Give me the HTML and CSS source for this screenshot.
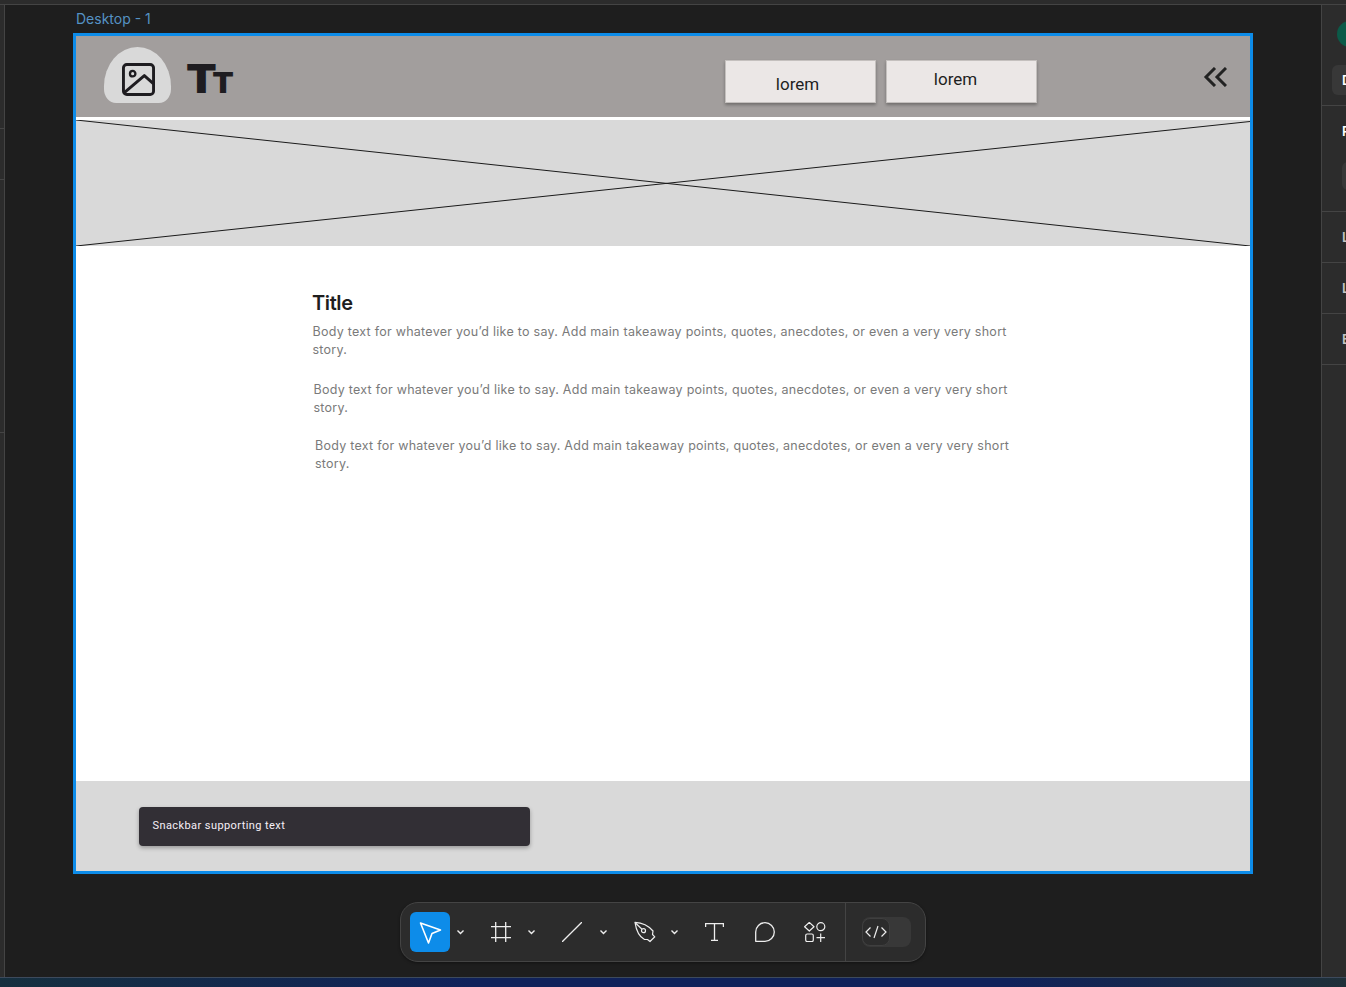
FILE: index.html
```html
<!DOCTYPE html>
<html lang="en">
<head>
    <meta charset="UTF-8">
    <title>Desktop - 1</title>
    <link rel="stylesheet" href="styles.css">
</head>
<body>
    <div class="top-strip"></div>

    <div class="workspace">
        <aside class="left-rail">
            <i class="tick tick-a"></i>
            <i class="tick tick-b"></i>
            <i class="tick tick-c"></i>
        </aside>

        <main class="canvas">
            <div class="frame-label">Desktop - 1</div>

            <div class="frame">
                <header class="site-header">
                    <div class="logo-blob">
                        <svg width="33" height="33" viewBox="0 0 34 34" fill="none" stroke="#1e1c20" stroke-width="3" stroke-linecap="round" stroke-linejoin="round">
                            <rect x="1.5" y="1.5" width="31" height="31" rx="3.5"/>
                            <circle cx="11" cy="11" r="2.8" stroke-width="2.4"/>
                            <path d="M3 30 L23 13 L32 21"/>
                        </svg>
                    </div>
                    <div class="logo-type"><span class="big-t">T</span><span class="small-t">T</span></div>
                    <button class="nav-btn nav-btn-low">lorem</button>
                    <button class="nav-btn nav-btn-high">lorem</button>
                    <svg class="collapse" width="24" height="20" viewBox="0 0 24 20" fill="none" stroke="#222" stroke-width="3">
                        <path d="M12 1 L3 10 L12 19"/>
                        <path d="M23 1 L14 10 L23 19"/>
                    </svg>
                </header>

                <div class="hero">
                    <svg width="100%" height="100%" viewBox="0 0 1174 126" preserveAspectRatio="none">
                        <path d="M0 0 L1174 126 M0 126 L1174 1.5" stroke="#1a1a1a" stroke-width="1" fill="none"/>
                    </svg>
                </div>

                <section class="article">
                    <h2>Title</h2>
                    <p class="para para-one">Body text for whatever you’d like to say. Add main takeaway points, quotes, anecdotes, or even a very very short story.</p>
                    <p class="para para-two">Body text for whatever you’d like to say. Add main takeaway points, quotes, anecdotes, or even a very very short story.</p>
                    <p class="para para-three">Body text for whatever you’d like to say. Add main takeaway points, quotes, anecdotes, or even a very very short story.</p>
                </section>

                <footer class="site-footer">
                    <div class="snackbar">Snackbar supporting text</div>
                </footer>
            </div>

            <div class="toolbar">
                <button class="tool-select">
                    <svg width="40" height="40" viewBox="0 0 40 40" fill="none" stroke="#fff" stroke-width="1.6" stroke-linejoin="round">
                        <path d="M10.5 11 L30.5 18 L22 21.5 L18.5 31 Z"/>
                    </svg>
                </button>
                <svg class="chev chev-first" width="9" height="6" viewBox="0 0 9 6" fill="none" stroke="#eee" stroke-width="1.4"><path d="M1.5 1.5 L4.5 4.5 L7.5 1.5"/></svg>

                <svg class="tool tool-frame" width="20" height="20" viewBox="0 0 20 20" fill="none" stroke="#eee" stroke-width="1.3">
                    <path d="M0 4.7 H20 M0 15.7 H20 M4.7 0 V20 M14.7 0 V20"/>
                </svg>
                <svg class="chev" width="9" height="6" viewBox="0 0 9 6" fill="none" stroke="#eee" stroke-width="1.4"><path d="M1.5 1.5 L4.5 4.5 L7.5 1.5"/></svg>

                <svg class="tool tool-line" width="20" height="20" viewBox="0 0 20 20" fill="none" stroke="#eee" stroke-width="1.3">
                    <path d="M0 20 L20 0"/>
                </svg>
                <svg class="chev chev-line" width="9" height="6" viewBox="0 0 9 6" fill="none" stroke="#eee" stroke-width="1.4"><path d="M1.5 1.5 L4.5 4.5 L7.5 1.5"/></svg>

                <svg class="tool tool-pen" width="22" height="22" viewBox="0 0 22 22" fill="none" stroke="#eee" stroke-width="1.2" stroke-linejoin="round">
                    <path d="M1 1.3 C7 1.5 14 4 19 10 L18.5 13.5 L20.8 15.8 L16 20.5 L13.5 18.5 L10.5 18.5 C5 15.5 2 8 1 1.3 Z"/>
                    <path d="M1.5 2 L8 8.2"/>
                    <circle cx="9.5" cy="9.7" r="2"/>
                </svg>
                <svg class="chev chev-pen" width="9" height="6" viewBox="0 0 9 6" fill="none" stroke="#eee" stroke-width="1.4"><path d="M1.5 1.5 L4.5 4.5 L7.5 1.5"/></svg>

                <svg class="tool tool-text" width="19" height="18" viewBox="0 0 19 18" fill="none" stroke="#eee" stroke-width="1.3">
                    <path d="M0.6 4 V0.7 H18.4 V4 M9.5 0.7 V17.3 M6 17.3 H13"/>
                </svg>

                <svg class="tool tool-bubble" width="20" height="20" viewBox="0 0 20 20" fill="none" stroke="#eee" stroke-width="1.3" stroke-linejoin="round">
                    <path d="M0.7 19.3 V10 A9.3 9.3 0 1 1 10 19.3 Z"/>
                </svg>

                <svg class="tool tool-parts" width="22" height="20" viewBox="0 0 22 20" fill="none" stroke="#eee" stroke-width="1.2" stroke-linejoin="round">
                    <path d="M5.3 0.4 L10 4.7 L5.3 9 L0.6 4.7 Z"/>
                    <circle cx="16.8" cy="4.7" r="4"/>
                    <rect x="1.7" y="12" width="7.6" height="7.6" rx="1.5"/>
                    <path d="M16.7 11.5 V20 M12.5 15.7 H21"/>
                </svg>

                <div class="toolbar-divider"></div>

                <div class="dev-toggle">
                    <div class="dev-knob">
                        <svg width="22" height="14" viewBox="0 0 22 14" fill="none" stroke="#eee" stroke-width="1.2">
                            <path d="M5.5 2.5 L1 7 L5.5 11.5 M16.5 2.5 L21 7 L16.5 11.5 M13 1 L9 13"/>
                        </svg>
                    </div>
                </div>
            </div>
        </main>

        <aside class="right-panel">
            <section class="panel-sec sec-top">
                <div class="avatar"></div>
                <div class="panel-tab">Design</div>
            </section>
            <section class="panel-sec sec-page">
                <div class="panel-title">Page</div>
                <div class="panel-field"></div>
            </section>
            <section class="panel-sec sec-row"><div class="panel-dim">Local variables</div></section>
            <section class="panel-sec sec-row"><div class="panel-dim">Local styles</div></section>
            <section class="panel-sec sec-row"><div class="panel-dim">Export</div></section>
        </aside>
    </div>

    <div class="wallpaper"></div>
</body>
</html>
```

FILE: styles.css
```css
* {
    box-sizing: border-box;
}

html, body {
    margin: 0;
    padding: 0;
    height: 987px;
    overflow: hidden;
}

body {
    width: 1346px;
    background-color: #1e1e1e;
    font-family: Inter, "Liberation Sans", sans-serif;
    display: flex;
    flex-direction: column;
}

.top-strip {
    height: 5px;
    background-color: #2c2c2c;
    border-bottom: 1px solid #444;
    flex: none;
}

.workspace {
    display: flex;
    height: 972px;
    flex: none;
}

.wallpaper {
    height: 10px;
    flex: none;
    border-top: 1px solid #3d4a5c;
    background: linear-gradient(90deg, #16303f 0%, #10225a 35%, #10225a 75%, #1f3039 100%);
}

/* left panel sliver */
.left-rail {
    width: 5px;
    flex: none;
    background-color: #2c2c2c;
    border-right: 1px solid #444;
    display: flex;
    flex-direction: column;
}

.tick {
    display: block;
    height: 1px;
    background-color: #444;
}

.tick-a { margin-top: 123px; }
.tick-b { margin-top: 50px; }
.tick-c { margin-top: 252px; }

/* canvas */
.canvas {
    flex: 1;
    display: flex;
    flex-direction: column;
    align-items: center;
}

.frame-label {
    width: 1180px;
    height: 28px;
    padding: 5px 0 0 3px;
    font-size: 14px;
    line-height: 17px;
    color: #5592c4;
}

.frame {
    width: 1180px;
    height: 841px;
    flex: none;
    border: 3px solid #0d8ce9;
    background-color: #fff;
    display: flex;
    flex-direction: column;
}

.site-header {
    height: 84px;
    flex: none;
    background-color: #a29e9d;
    border-bottom: 3px solid #fff;
    display: flex;
    align-items: flex-start;
}

.logo-blob {
    width: 67px;
    height: 56px;
    margin: 11px 0 0 28px;
    background-color: #d9d9d9;
    border-radius: 50% 50% 12px 12px / 70% 70% 14px 14px;
    display: flex;
    align-items: center;
    justify-content: center;
    padding: 9px 0 0 1px;
    flex: none;
}

.logo-type {
    margin: 21px 0 0 15px;
    width: 48px;
    height: 44px;
    color: #1e1c20;
    font-weight: 900;
    display: flex;
    align-items: baseline;
    flex: none;
    transform: scaleX(1.12);
    transform-origin: left center;
}

.big-t {
    font-size: 40px;
    line-height: 44px;
}

.small-t {
    font-size: 28px;
    line-height: 44px;
    margin-left: -4px;
}

.nav-btn {
    width: 151px;
    height: 43px;
    background-color: #ebe7e6;
    border: 1px solid #c4c0be;
    box-shadow: 0 2px 3px rgba(0, 0, 0, 0.3);
    font-family: Roboto, sans-serif;
    font-size: 17px;
    color: #1e1e1e;
    margin-top: 24px;
    padding: 0;
    flex: none;
}

.nav-btn-low {
    margin-left: 491px;
    padding: 4px 6px 0 0;
}

.nav-btn-high {
    margin-left: 10px;
    padding: 0 12px 5px 0;
}

.collapse {
    margin: 31px 0 0 166px;
    flex: none;
}

.hero {
    height: 126px;
    flex: none;
    background-color: #d9d9d9;
}

.hero svg {
    display: block;
}

.article {
    flex: 1;
    padding-top: 45px;
}

.article h2 {
    margin: 0 0 8px 236px;
    font-size: 20px;
    line-height: 24px;
    font-weight: 600;
    letter-spacing: -0.4px;
    color: #1e1e1e;
}

.para {
    margin: 0;
    width: 710px;
    font-size: 12.5px;
    line-height: 18px;
    letter-spacing: 0.26px;
    color: #7a7a7a;
}

.para-one { margin-left: 236.5px; }
.para-two { margin: 22px 0 0 237.5px; }
.para-three { margin: 20px 0 0 239px; }

.site-footer {
    height: 90px;
    flex: none;
    background-color: #d9d9d9;
    padding: 26px 0 0 63px;
}

.snackbar {
    width: 391px;
    height: 39px;
    padding: 0 13.5px;
    background-color: #322f35;
    border-radius: 4px;
    box-shadow: 0 2px 4px rgba(0, 0, 0, 0.3);
    color: #f5eff7;
    font-family: Roboto, sans-serif;
    font-size: 11px;
    line-height: 37px;
    letter-spacing: 0.42px;
}

/* tools bar under the frame */
.toolbar {
    margin-top: 28px;
    width: 526px;
    height: 60px;
    flex: none;
    background-color: #2c2c2c;
    border: 1px solid #444;
    border-radius: 18px;
    box-shadow: 0 1px 3px rgba(0, 0, 0, 0.4);
    display: flex;
    align-items: center;
    padding-left: 9px;
}

.tool-select {
    width: 40px;
    height: 40px;
    border: none;
    padding: 0;
    background-color: #0d8ce9;
    border-radius: 6px;
    flex: none;
}

.tool-select svg {
    display: block;
}

.tool, .chev {
    flex: none;
    display: block;
}

.chev { margin-left: 16px; }
.chev-first { margin-left: 6px; }
.chev-line { margin-left: 17px; }
.chev-pen { margin-left: 14px; }

.tool-frame, .tool-line, .tool-pen, .tool-text { margin-left: 26px; }
.tool-bubble { margin-left: 31px; }
.tool-parts { margin-left: 29px; }

.toolbar-divider {
    width: 1px;
    height: 58px;
    margin-left: 19px;
    background-color: #444;
    flex: none;
}

.dev-toggle {
    width: 49px;
    height: 30px;
    margin-left: 16px;
    background-color: #383838;
    border-radius: 8px;
    flex: none;
}

.dev-knob {
    width: 28px;
    height: 28px;
    margin-top: 1px;
    background-color: #2c2c2c;
    border: 1px solid #3f3f3f;
    border-radius: 8px;
    display: flex;
    align-items: center;
    justify-content: center;
}

/* right panel, cut by the window edge */
.right-panel {
    width: 25px;
    flex: none;
    overflow: hidden;
    background-color: #2c2c2c;
    border-left: 1px solid #444;
}

.panel-sec {
    width: 200px;
    border-bottom: 1px solid #444;
    padding-left: 20px;
    font-size: 13px;
    line-height: 16px;
    white-space: nowrap;
}

.sec-top {
    height: 101px;
    padding-left: 15px;
    padding-top: 16px;
}

.avatar {
    width: 26px;
    height: 26px;
    border-radius: 50%;
    background-color: #0b5a48;
}

.panel-tab {
    margin: 18px 0 0 -5px;
    width: 80px;
    height: 30px;
    padding: 7px 0 0 10px;
    background-color: #383838;
    border-radius: 6px;
    color: #fff;
    font-weight: 600;
}

.sec-page {
    height: 106px;
    padding-top: 17px;
}

.panel-title {
    color: #fff;
    font-weight: 600;
}

.panel-field {
    margin-top: 23px;
    width: 120px;
    height: 28px;
    background-color: #383838;
    border-radius: 6px;
}

.sec-row {
    height: 51px;
    padding-top: 17px;
}

.panel-dim {
    color: #c4c4c4;
    font-weight: 600;
}
```
